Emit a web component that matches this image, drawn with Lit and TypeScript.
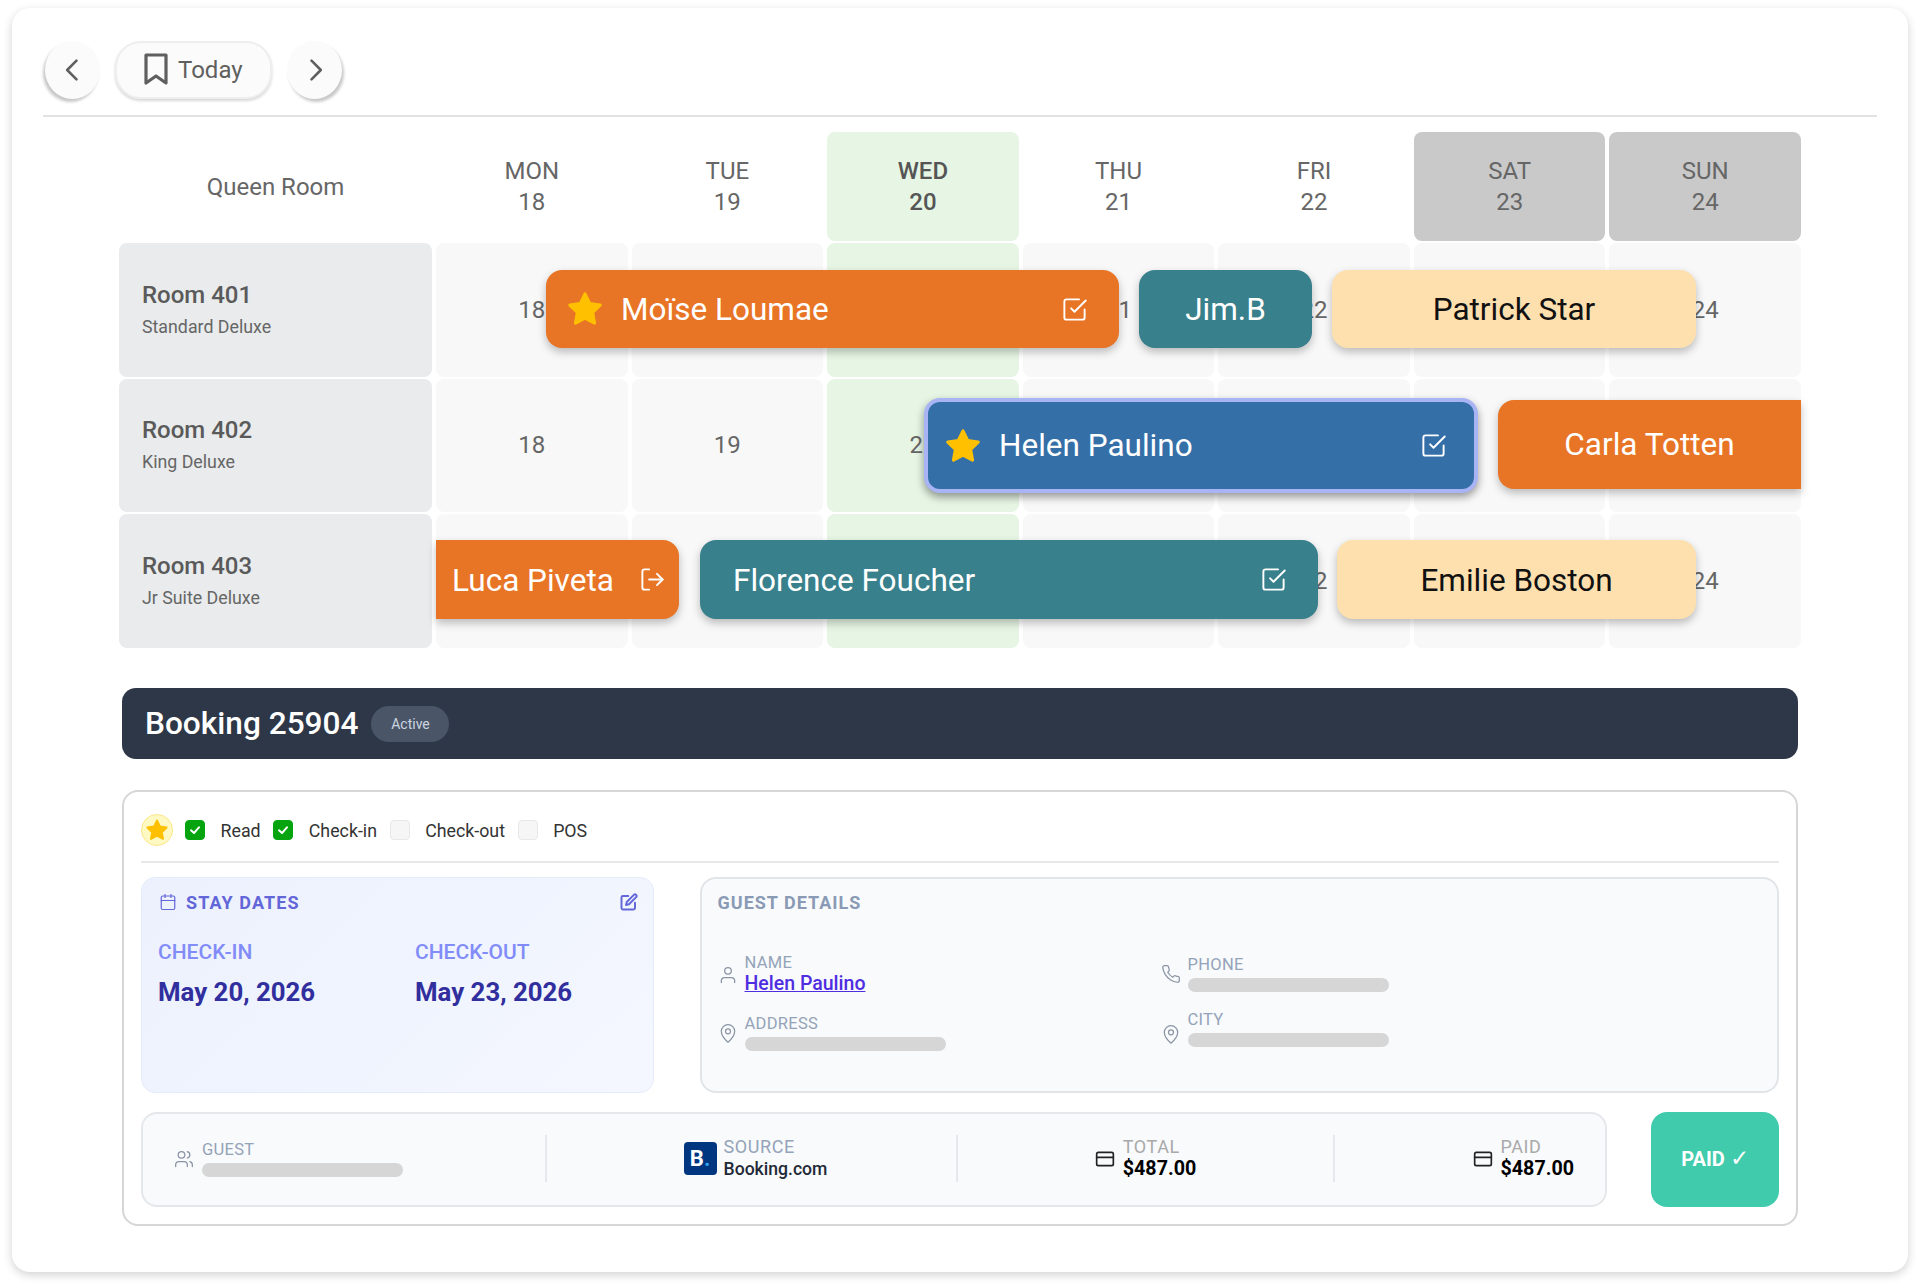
import { LitElement, css, html, svg } from "lit";
import { customElement } from "lit/decorators.js";

const days = [
    { name: "MON", num: 18, kind: "" },
    { name: "TUE", num: 19, kind: "" },
    { name: "WED", num: 20, kind: "today" },
    { name: "THU", num: 21, kind: "" },
    { name: "FRI", num: 22, kind: "" },
    { name: "SAT", num: 23, kind: "off" },
    { name: "SUN", num: 24, kind: "off" },
];

// shown: the day numbers that stay visible beside the reservations
const rooms = [
    { name: "Room 401", type: "Standard Deluxe", shown: [18, 21, 22, 24] },
    { name: "Room 402", type: "King Deluxe", shown: [18, 19, 20] },
    { name: "Room 403", type: "Jr Suite Deluxe", shown: [22, 24] },
];

interface Bar {
    name: string;
    x1: number;
    x2: number;
    y1: number;
    y2: number;
    cls: string;
    star?: boolean;
    end?: "check" | "out";
}

// page coordinates of the reservations, converted against the grid origin when drawn
const GRID_X = 119;
const GRID_Y = 132;
const bars: Bar[] = [
    { name: "Moïse Loumae", x1: 546, x2: 1119, y1: 270, y2: 348, cls: "orange split", star: true, end: "check" },
    { name: "Jim.B", x1: 1139, x2: 1312, y1: 270, y2: 348, cls: "teal" },
    { name: "Patrick Star", x1: 1332, x2: 1696, y1: 270, y2: 348, cls: "sand" },
    { name: "Helen Paulino", x1: 924, x2: 1478, y1: 398, y2: 493, cls: "blue split", star: true, end: "check" },
    { name: "Carla Totten", x1: 1498, x2: 1801, y1: 400, y2: 489, cls: "orange open-right" },
    { name: "Luca Piveta", x1: 436, x2: 679, y1: 540, y2: 619, cls: "orange open-left split low-text", end: "out" },
    { name: "Florence Foucher", x1: 700, x2: 1318, y1: 540, y2: 619, cls: "teal split wide low-text", end: "check" },
    { name: "Emilie Boston", x1: 1337, x2: 1696, y1: 540, y2: 619, cls: "sand low-text" },
];

const star = (cls: string) => html`<svg class=${cls} viewBox="0 0 24 24">
    <polygon points="12 2.5 15 8.6 21.6 9.5 16.8 14.2 18 20.9 12 17.7 6 20.9 7.2 14.2 2.4 9.5 9 8.6"
        fill="#ffc000" stroke="#ffc000" stroke-width="2" stroke-linejoin="round" />
</svg>`;

const line = (cls: string, body: unknown, box = "0 0 24 24") => html`<svg class=${cls} viewBox=${box} fill="none"
    stroke="currentColor" stroke-linecap="round" stroke-linejoin="round">${body}</svg>`;

const checkBox = svg`<polyline points="9 11 12 14 22 4" /><path d="M21 12v7a2 2 0 0 1-2 2H5a2 2 0 0 1-2-2V5a2 2 0 0 1 2-2h11" />`;
const logOut = svg`<path d="M9 21H5a2 2 0 0 1-2-2V5a2 2 0 0 1 2-2h4" /><polyline points="16 17 21 12 16 7" /><line x1="21" y1="12" x2="9" y2="12" />`;
const calendar = svg`<rect x="3" y="4" width="18" height="18" rx="2" /><line x1="16" y1="2" x2="16" y2="6" /><line x1="8" y1="2" x2="8" y2="6" /><line x1="3" y1="10" x2="21" y2="10" />`;
const edit = svg`<path d="M11 4H4a2 2 0 0 0-2 2v14a2 2 0 0 0 2 2h14a2 2 0 0 0 2-2v-7" /><path d="M18.5 2.5a2.121 2.121 0 0 1 3 3L12 15l-4 1 1-4 9.5-9.5z" />`;
const user = svg`<circle cx="12" cy="7" r="4" /><path d="M20 21v-2a4 4 0 0 0-4-4H8a4 4 0 0 0-4 4v2" />`;
const users = svg`<path d="M16 21v-2a4 4 0 0 0-4-4H6a4 4 0 0 0-4 4v2" /><circle cx="9" cy="7" r="4" /><path d="M22 21v-2a4 4 0 0 0-3-3.87" /><path d="M16 3.13a4 4 0 0 1 0 7.75" />`;
const pin = svg`<path d="M20 10c0 6.5-8 13-8 13s-8-6.5-8-13a8 8 0 0 1 16 0z" /><circle cx="12" cy="10" r="3" />`;
const phone = svg`<path d="M22 16.9v3a2 2 0 0 1-2.2 2 19.8 19.8 0 0 1-8.6-3.1 19.5 19.5 0 0 1-6-6 19.8 19.8 0 0 1-3.1-8.7A2 2 0 0 1 4.1 2h3a2 2 0 0 1 2 1.7c.1 1 .4 1.9.7 2.8a2 2 0 0 1-.5 2.1L8.1 9.9a16 16 0 0 0 6 6l1.3-1.3a2 2 0 0 1 2.1-.4c.9.3 1.8.6 2.8.7a2 2 0 0 1 1.7 2z" />`;
const cardIcon = svg`<rect x="2" y="4" width="20" height="16" rx="2" /><line x1="2" y1="10" x2="22" y2="10" />`;
const tick = svg`<polyline points="6 12.5 10.5 16.5 18 8" />`;

@customElement("app-root")
export class AppRoot extends LitElement {
    renderBar(b: Bar) {
        const pos = `left:${b.x1 - GRID_X}px;top:${b.y1 - GRID_Y}px;width:${b.x2 - b.x1}px;height:${b.y2 - b.y1}px`;
        return html`<div class="bar ${b.cls}" style=${pos}>
            ${b.star ? star("bar-star") : ""}
            <span class="bar-name">${b.name}</span>
            ${b.end === "check" ? line("bar-end", checkBox) : ""}
            ${b.end === "out" ? line("bar-end", logOut) : ""}
        </div>`;
    }

    renderGrid() {
        return html`<div class="grid">
            <div class="corner">Queen Room</div>
            ${days.map((d) => html`<div class="head ${d.kind}"><span>${d.name}</span><span>${d.num}</span></div>`)}
            ${rooms.map(
                (r) => html`
                    <div class="room"><b>${r.name}</b><span>${r.type}</span></div>
                    ${days.map(
                        (d) => html`<div class="cell ${d.kind === "today" ? "today" : ""}">
                            ${r.shown.includes(d.num) ? d.num : ""}
                        </div>`
                    )}
                `
            )}
            ${bars.map((b) => this.renderBar(b))}
        </div>`;
    }

    renderFlag(label: string, on: boolean) {
        return html`<span class="box ${on ? "on" : ""}">${on ? line("tick", tick) : ""}</span><span class="flag">${label}</span>`;
    }

    render() {
        return html`
            <div class="card">
                <nav class="nav">
                    <button class="round prev">${line("chev", svg`<polyline points="15 4 7 12 15 20" />`)}</button>
                    <button class="today-btn">
                        <svg class="mark" viewBox="0 0 24 32" fill="none" stroke="currentColor" stroke-width="3.2" stroke-linejoin="round">
                            <path d="M2 2h20v28l-10-7-10 7z" />
                        </svg>
                        Today
                    </button>
                    <button class="round next">${line("chev", svg`<polyline points="9 4 17 12 9 20" />`)}</button>
                </nav>

                ${this.renderGrid()}

                <div class="booking-bar">
                    <h2>Booking 25904</h2>
                    <span class="badge">Active</span>
                </div>

                <section class="panel">
                    <div class="flags">
                        <span class="star-dot">${star("dot-star")}</span>
                        ${this.renderFlag("Read", true)}
                        ${this.renderFlag("Check-in", true)}
                        ${this.renderFlag("Check-out", false)}
                        ${this.renderFlag("POS", false)}
                    </div>

                    <div class="details">
                        <div class="stay">
                            <div class="stay-title">
                                ${line("cal", calendar)}
                                <span>STAY DATES</span>
                                ${line("edit", edit)}
                            </div>
                            <div class="dates">
                                <div><label>CHECK-IN</label><strong>May 20, 2026</strong></div>
                                <div><label>CHECK-OUT</label><strong>May 23, 2026</strong></div>
                            </div>
                        </div>

                        <div class="guest">
                            <div class="guest-title">GUEST DETAILS</div>
                            <div class="guest-cols">
                                <div class="col left">
                                    <div class="field">
                                        ${line("ico user", user)}
                                        <div><small>NAME</small><a class="name">Helen Paulino</a></div>
                                    </div>
                                    <div class="field">
                                        ${line("ico", pin)}
                                        <div><small>ADDRESS</small><i class="blur"></i></div>
                                    </div>
                                </div>
                                <div class="col right">
                                    <div class="field">
                                        ${line("ico", phone)}
                                        <div><small>PHONE</small><i class="blur"></i></div>
                                    </div>
                                    <div class="field">
                                        ${line("ico low", pin)}
                                        <div><small>CITY</small><i class="blur"></i></div>
                                    </div>
                                </div>
                            </div>
                        </div>
                    </div>

                    <div class="footer">
                        <div class="strip">
                            <div class="part s-guest">
                                ${line("ico", users)}
                                <div><small>GUEST</small><i class="blur"></i></div>
                            </div>
                            <div class="part s-source">
                                <span class="logo">B<em>.</em></span>
                                <div><small class="big">SOURCE</small><span class="val src">Booking.com</span></div>
                            </div>
                            <div class="part s-total">
                                ${line("money", cardIcon)}
                                <div><small class="big grey">TOTAL</small><span class="val">$487.00</span></div>
                            </div>
                            <div class="part s-paid">
                                ${line("money", cardIcon)}
                                <div><small class="big grey">PAID</small><span class="val">$487.00</span></div>
                            </div>
                        </div>
                        <button class="paid">PAID <span class="paid-tick">✓</span></button>
                    </div>
                </section>
            </div>
        `;
    }

    static styles = css`
        :host {
            display: block;
            width: 1920px;
            height: 1288px;
            overflow: hidden;
            background: #fff;
            font-family: Roboto, "Liberation Sans", sans-serif;
            color: #666;
        }

        .card {
            box-sizing: border-box;
            width: 1896px;
            height: 1264px;
            margin: 8px 12px 0;
            padding: 33px 31px 0;
            background: #fff;
            border-radius: 18px;
            box-shadow: 0 3px 10px rgba(0, 0, 0, 0.18);
        }

        .nav {
            display: flex;
            gap: 15px;
            padding: 0 0 16px 2px;
            border-bottom: 2px solid #e2e2e2;
        }

        button {
            font: inherit;
            color: #5f5f5f;
            border: 0;
            background: #fbfbfb;
            padding: 0;
        }

        .round {
            display: flex;
            align-items: center;
            justify-content: center;
            width: 55px;
            height: 58px;
            border-radius: 50%;
        }

        .prev {
            box-shadow: -2px 3px 3px rgba(0, 0, 0, 0.22);
        }

        .next {
            box-shadow: 2px 3px 3px rgba(0, 0, 0, 0.22);
        }

        .chev {
            width: 28px;
            height: 28px;
            stroke-width: 2.2;
        }

        .today-btn {
            box-sizing: border-box;
            display: flex;
            align-items: center;
            gap: 10px;
            width: 157px;
            height: 58px;
            padding-left: 27px;
            font-size: 24px;
            border: 2px solid #eeeeee;
            border-radius: 26px;
            box-shadow: 0 2px 3px rgba(0, 0, 0, 0.16);
        }

        .mark {
            width: 24px;
            height: 32px;
            margin-top: -2px;
        }

        .grid {
            position: relative;
            display: grid;
            grid-template-columns: 313px repeat(7, 1fr);
            grid-template-rows: 109px repeat(3, 133.5px);
            column-gap: 4px;
            row-gap: 2px;
            width: 1682px;
            margin: 15px 0 0 76px;
            font-size: 24px;
        }

        .corner,
        .cell {
            display: flex;
            align-items: center;
            justify-content: center;
        }

        .head {
            display: flex;
            flex-direction: column;
            align-items: center;
            justify-content: center;
            gap: 3px;
            line-height: 28px;
            border-radius: 8px;
        }

        .head.today {
            background: #e6f5e4;
            color: #555;
            font-weight: 500;
        }

        .head.off {
            background: #c9c9c9;
        }

        .room {
            display: flex;
            flex-direction: column;
            justify-content: center;
            gap: 6px;
            padding-left: 23px;
            background: #e9ebec;
            border-radius: 8px;
        }

        .room b {
            font-weight: 500;
            line-height: 28px;
            color: #5a5a5a;
        }

        .room span {
            font-size: 17.8px;
            line-height: 24px;
        }

        .cell {
            background: #f8f8f8;
            border-radius: 8px;
        }

        .cell.today {
            background: #e6f5e4;
        }

        .bar {
            position: absolute;
            box-sizing: border-box;
            display: flex;
            align-items: center;
            justify-content: center;
            font-size: 31.5px;
            border-radius: 16px;
            box-shadow: 0 4px 8px rgba(0, 0, 0, 0.25);
        }

        .bar.low-text .bar-name {
            margin-top: 1px;
        }

        .bar.split {
            justify-content: flex-start;
            padding: 0 31px 0 22px;
        }

        .bar.wide {
            padding-left: 33px;
        }

        .bar.open-left {
            padding: 0 13px 0 16px;
            border-radius: 0 16px 16px 0;
        }

        .bar.open-right {
            border-radius: 16px 0 0 16px;
        }

        .orange {
            background: #e87425;
            color: #fff;
        }

        .teal {
            background: #38808c;
            color: #fff;
        }

        .sand {
            background: #fde0ae;
            color: #111;
        }

        .blue {
            background: #356fa8;
            color: #fff;
            border: 4px solid #a8b4f4;
            padding: 0 27px 0 18px !important;
            box-shadow: 0 4px 8px rgba(0, 0, 0, 0.4);
        }

        .bar-star {
            width: 38px;
            height: 38px;
            margin: 0 17px 0 -2px;
        }

        .bar-name {
            white-space: nowrap;
        }

        .bar-end {
            width: 27px;
            height: 27px;
            margin-left: auto;
            stroke-width: 1.7;
        }

        .booking-bar {
            display: flex;
            align-items: center;
            gap: 13px;
            box-sizing: border-box;
            width: 1676px;
            height: 71px;
            margin: 40.5px 0 0 79px;
            padding-left: 23px;
            background: #2d3748;
            border-radius: 14px;
            color: #fff;
        }

        h2 {
            margin: 0;
            font-size: 31.6px;
            font-weight: 500;
        }

        .badge {
            display: flex;
            align-items: center;
            justify-content: center;
            width: 78px;
            height: 36px;
            font-size: 14px;
            color: #cbd5e0;
            background: #4a5568;
            border-radius: 18px;
        }

        .panel {
            box-sizing: border-box;
            width: 1676px;
            height: 436px;
            margin: 31px 0 0 79px;
            padding: 22px 17px 0;
            border: 2px solid #d6d6d6;
            border-radius: 16px;
        }

        .flags {
            display: flex;
            align-items: center;
            height: 32px;
            padding-bottom: 15px;
            border-bottom: 2px solid #e8e8e8;
            font-size: 17.8px;
            color: #333;
        }

        .star-dot {
            box-sizing: border-box;
            display: flex;
            align-items: center;
            justify-content: center;
            width: 32px;
            height: 32px;
            margin-right: 12px;
            background: #fef9c3;
            border: 1.5px solid #fde68a;
            border-radius: 50%;
        }

        .dot-star {
            width: 24px;
            height: 24px;
        }

        .box {
            box-sizing: border-box;
            display: flex;
            align-items: center;
            justify-content: center;
            width: 20px;
            height: 20px;
            margin-right: 15.5px;
            background: #f6f6f6;
            border: 1px solid #e8e8e8;
            border-radius: 4px;
        }

        .box.on {
            background: #06a50f;
            border-color: #06a50f;
            color: #fff;
        }

        .tick {
            width: 16px;
            height: 16px;
            stroke-width: 3;
        }

        .flag {
            margin-right: 12.7px;
        }

        .details {
            display: flex;
            gap: 46px;
            height: 216px;
            margin-top: 14px;
        }

        .stay {
            box-sizing: border-box;
            width: 513px;
            padding: 15px 17px 16px 16px;
            background: linear-gradient(135deg, #ecf1fd, #f4f7ff);
            border: 1px solid #e6ebfb;
            border-radius: 14px;
        }

        .stay-title {
            display: flex;
            align-items: center;
            gap: 9px;
            height: 18px;
            color: #6366d8;
            font-size: 18px;
            font-weight: 700;
            letter-spacing: 1.1px;
        }

        .cal {
            width: 18px;
            height: 18px;
            stroke-width: 1.6;
            margin-left: 1px;
        }

        .edit {
            width: 18px;
            height: 18px;
            margin: 0 -2px 0 auto;
            stroke-width: 2.6;
        }

        .dates {
            display: grid;
            grid-template-columns: 257px 1fr;
            margin-top: 29px;
        }

        .dates label {
            display: block;
            font-size: 21px;
            line-height: 24px;
            font-weight: 500;
            color: #818cf8;
        }

        .dates strong {
            display: block;
            margin-top: 12px;
            font-size: 25.8px;
            line-height: 32px;
            font-weight: 700;
            color: #312e9e;
        }

        .guest {
            box-sizing: border-box;
            flex: 1;
            padding: 14px 15.5px;
            background: #f8fafc;
            border: 2px solid #e2e5e8;
            border-radius: 16px;
        }

        .guest-title {
            font-size: 18px;
            line-height: 20px;
            font-weight: 700;
            letter-spacing: 1px;
            color: #8a9ab5;
        }

        .guest-cols {
            display: grid;
            grid-template-columns: 443px 1fr;
        }

        .col {
            display: flex;
            flex-direction: column;
        }

        .col.left {
            gap: 20px;
            margin-top: 41px;
        }

        .col.right {
            gap: 19px;
            margin-top: 43px;
        }

        .field {
            display: flex;
            align-items: center;
            gap: 7px;
        }

        .ico {
            flex: none;
            width: 20px;
            height: 20px;
            stroke-width: 1.5;
            color: #8a94a4;
        }

        .ico.low {
            margin-top: 10px;
        }

        small {
            display: block;
            font-size: 16.5px;
            line-height: 18px;
            letter-spacing: 0.3px;
            color: #94a3b8;
        }

        small.big {
            font-size: 18px;
            letter-spacing: 0.6px;
        }

        small.grey {
            color: #a9a9a9;
        }

        .name {
            display: block;
            margin-top: 1px;
            font-size: 19.5px;
            line-height: 22px;
            font-weight: 500;
            color: #4f2de0;
            text-decoration: underline;
        }

        .blur {
            display: block;
            width: 201px;
            height: 14px;
            margin-top: 4px;
            background: #d6d6d6;
            border-radius: 7px;
        }

        .footer {
            display: flex;
            gap: 44px;
            height: 95px;
            margin-top: 19px;
        }

        .strip {
            box-sizing: border-box;
            display: flex;
            align-items: center;
            width: 1466px;
            padding-bottom: 2px;
            background: #f8fafc;
            border: 2px solid #e5e7eb;
            border-radius: 16px;
        }

        .part {
            display: flex;
            align-items: center;
            box-sizing: border-box;
            height: 47px;
        }

        .s-guest {
            gap: 8px;
            width: 402px;
            padding-left: 31px;
        }

        .s-source,
        .s-total,
        .s-paid {
            border-left: 2px solid #e5e8ec;
        }

        .s-source {
            justify-content: center;
            gap: 7px;
            width: 411px;
            padding-left: 8px;
        }

        .s-total {
            justify-content: center;
            gap: 8px;
            width: 377px;
        }

        .s-paid {
            flex: 1;
            justify-content: flex-end;
            gap: 8px;
            padding-right: 31px;
        }

        .logo {
            display: flex;
            align-items: center;
            justify-content: center;
            width: 33px;
            height: 33px;
            font-size: 22px;
            font-weight: 700;
            color: #fff;
            background: #003580;
            border-radius: 4px;
        }

        .logo em {
            font-style: normal;
            color: #2ea3f2;
        }

        .val {
            display: block;
            margin-top: 2px;
            font-size: 19.7px;
            line-height: 22px;
            font-weight: 700;
            color: #000;
        }

        .val.src {
            font-size: 17.6px;
            font-weight: 500;
            color: #1f2937;
        }

        .money {
            width: 20px;
            height: 20px;
            stroke-width: 2;
            color: #222;
        }

        .paid {
            flex: 1;
            padding-bottom: 3px;
            font-size: 20px;
            font-weight: 700;
            color: #fff;
            background: #40cbac;
            border-radius: 16px;
        }

        .paid-tick {
            font-size: 23px;
            font-weight: 400;
        }
    `;
}
